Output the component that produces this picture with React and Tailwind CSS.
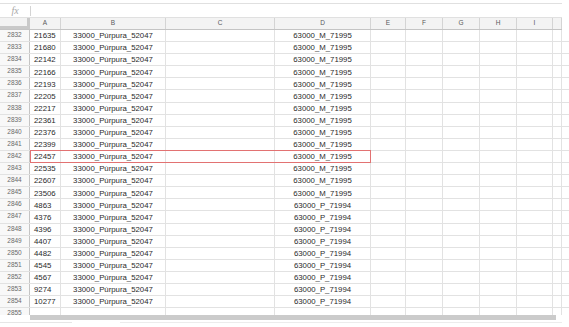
import React from 'react';

const aValues = [
  21635, 21680, 22142, 22166, 22193, 22205, 22217, 22361, 22376, 22399, 22457, 22535,
  22607, 23506, 4863, 4376, 4396, 4407, 4482, 4545, 4567, 9274, 10277, '',
];

const rows = aValues.map((a, i) => ({
  num: 2832 + i,
  a,
  b: a === '' ? '' : '33000_Púrpura_52047',
  d: a === '' ? '' : i < 14 ? '63000_M_71995' : '63000_P_71994',
}));

const cols = [
  { key: 'A', w: 'w-[31px]' },
  { key: 'B', w: 'w-[105px]' },
  { key: 'C', w: 'w-[109px]' },
  { key: 'D', w: 'w-[96px]' },
  { key: 'E', w: 'w-[35px]' },
  { key: 'F', w: 'w-[37px]' },
  { key: 'G', w: 'w-[37px]' },
  { key: 'H', w: 'w-[37px]' },
  { key: 'I', w: 'w-[36px]' },
];

const Row = ({ row }) => {
  const selected = row.num === 2842;
  return (
    <div className="relative flex h-[12.1px] shrink-0 border-b border-[#e2e2e2]">
      <div className="flex w-[30px] shrink-0 justify-center border-r border-[#c4c4c4] bg-[#f8f8f8] pt-[2px] text-[6.5px] leading-none text-[#6a6a6a]">
        {row.num}
      </div>
      <div className="flex w-[31px] shrink-0 items-end border-r border-[#e2e2e2] pb-[1px] pl-[4px] text-[7.8px] leading-none text-[#2a2a2a]">
        {row.a}
      </div>
      <div className="flex w-[105px] shrink-0 items-end justify-center border-r border-[#e2e2e2] pb-[1px] text-[7.8px] leading-none text-[#2a2a2a]">
        {row.b}
      </div>
      <div className="w-[109px] shrink-0 border-r border-[#e2e2e2]" />
      <div className="flex w-[96px] shrink-0 items-end justify-center border-r border-[#e2e2e2] pb-[1px] text-[7.8px] leading-none text-[#2a2a2a]">
        {row.d}
      </div>
      <div className="w-[35px] shrink-0 border-r border-[#e2e2e2]" />
      <div className="w-[37px] shrink-0 border-r border-[#e2e2e2]" />
      <div className="w-[37px] shrink-0 border-r border-[#e2e2e2]" />
      <div className="w-[37px] shrink-0 border-r border-[#e2e2e2]" />
      <div className="w-[36px] shrink-0 border-r border-[#e2e2e2]" />
      <div className="w-[9px] shrink-0 border-r border-[#e2e2e2]" />
      {selected && (
        <div className="pointer-events-none absolute left-[30px] top-[-1px] h-[13px] w-[341px] border border-[#e27272]" />
      )}
    </div>
  );
};

export default function App() {
  return (
    <div className="h-[327px] w-[569px] overflow-hidden bg-white font-['Liberation_Sans',Arial,sans-serif]">
      <div className="h-[3px]" />

      {/* formula bar */}
      <div className="flex h-[15px] w-[562px] items-center border-y border-[#e0e0e0]">
        <div className="flex w-[30px] items-center justify-center font-['Liberation_Serif',serif] text-[10px] italic leading-none text-[#a8a8a8]">
          fx
        </div>
        <div className="h-[10px] w-px bg-[#d4d4d4]" />
      </div>

      {/* column headers */}
      <div className="flex h-[12px] w-[562px] border-b border-[#c4c4c4] bg-[#f3f3f3]">
        <div className="w-[30px] shrink-0 border-b-[3px] border-r-[3px] border-[#c9c9c9] bg-[#f3f3f3]" />
        {cols.map((c) => (
          <div
            key={c.key}
            className={`${c.w} flex shrink-0 items-center justify-center border-r border-[#d4d4d4] text-[6.5px] leading-none text-[#5a5a5a]`}
          >
            {c.key}
          </div>
        ))}
        <div className="w-[9px] shrink-0 border-r border-[#d4d4d4]" />
      </div>

      {/* grid */}
      <div className="flex h-[285px] flex-col overflow-hidden">
        {rows.map((r) => (
          <Row key={r.num} row={r} />
        ))}
      </div>

      {/* horizontal scrollbar */}
      <div className="flex h-[5px]">
        <div className="w-[30px] shrink-0" />
        <div className="w-[526px] shrink-0 bg-[#cbcbcb]" />
      </div>
      <div className="mt-[2px] flex h-px">
        <div className="w-[72px] bg-[#e6e6e6]" />
        <div className="w-[48px]" />
        <div className="w-[442px] bg-[#ececec]" />
      </div>
    </div>
  );
}
